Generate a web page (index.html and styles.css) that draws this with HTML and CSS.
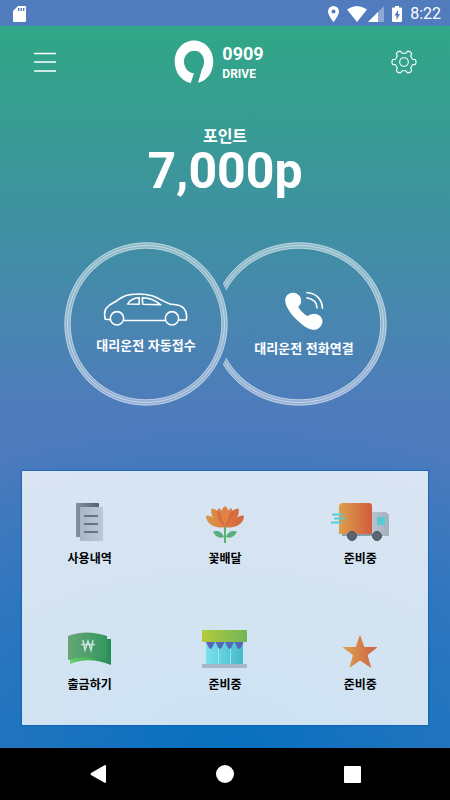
FILE: index.html
```html
<!DOCTYPE html>
<html lang="ko">
<head>
  <meta charset="UTF-8">
  <meta name="viewport" content="width=device-width, initial-scale=1">
  <title>0909 DRIVE</title>
  <link rel="stylesheet" href="styles.css">
</head>
<body>
  <div class="statusbar">
    <svg width="14" height="16" viewBox="0 0 14 16"><path fill="#fff" d="M5 0h7a1 1 0 0 1 1 1v14a1 1 0 0 1-1 1H1a1 1 0 0 1-1-1V5z"/><path stroke="#507bbd" stroke-width="1.4" d="M5.7 2v3M8.2 2v3M10.7 2v3"/></svg>
    <div class="status-icons">
      <svg class="pin" width="11" height="16" viewBox="0 0 11 16"><path fill="#fff" fill-rule="evenodd" d="M5.5 0A5.5 5.5 0 0 0 0 5.500C0 9.500 5.500 16 5.500 16S11 9.500 11 5.500A5.500 5.500 0 0 0 5.500 0zm0 3.600a2 2 0 1 1 0 4 2 2 0 0 1 0-4z"/></svg>
      <svg class="wifi" width="20" height="16" viewBox="0 0 20 16"><path fill="#fff" d="M0 3.500Q10-3.500 20 3.500L10 16z"/></svg>
      <svg class="signal" width="16" height="16" viewBox="0 0 16 16"><path fill="#fff" opacity=".35" d="M16 0v16H0z"/><path fill="#fff" d="M10 6v10H0z"/></svg>
      <svg class="battery" width="10" height="16" viewBox="0 0 10 16"><path fill="#fff" d="M3 0h4v1.500h2a1 1 0 0 1 1 1V15a1 1 0 0 1-1 1H1a1 1 0 0 1-1-1V2.500a1 1 0 0 1 1-1h2z"/><path fill="#507bbd" d="M6 4L2.500 9.500h2V14L8 8H6z"/></svg>
      <span class="clock">8:22</span>
    </div>
  </div>

  <main class="app">
    <header class="topbar">
      <button class="icon-btn" aria-label="메뉴">
        <svg width="24" height="24" viewBox="0 0 24 24"><path stroke="#fff" stroke-width="1.6" d="M1 3.500h22M1 12h22M1 21h22"/></svg>
      </button>
      <div class="logo">
        <svg width="40" height="44" viewBox="0 0 40 44"><path fill="#fff" d="M16.700 43C7 41 .7 32 .7 21.500C.7 10 9 .5 20 .5S39.300 10 39.300 21.500C39.300 32 33 41 24 42.800L28 29C29.500 27 30 24.500 30 21.500C30 15.500 26 10.700 20.300 10.700S10 15.500 10 21.500S14 32.800 20 33.300Z"/></svg>
        <div class="logo-text">
          <span class="logo-num">0909</span>
          <span class="logo-name">DRIVE</span>
        </div>
      </div>
      <button class="icon-btn" aria-label="설정">
        <svg width="26" height="26" viewBox="0 0 26 26" fill="none" stroke="#fff" stroke-width="1.100" stroke-linejoin="round"><path d="M21.600 10.200L24.200 10.600Q26 13 24.200 15.400L21.600 15.800L19.700 19L20.700 21.500Q19.500 24 16.600 23.900L14.900 21.800H11.100L9.400 23.900Q6.500 24 5.300 21.500L6.300 19L4.400 15.800L1.800 15.400Q0 13 1.800 10.600L4.400 10.200L6.300 7L5.300 4.500Q6.500 2 9.400 2.100L11.100 4.200H14.900L16.600 2.100Q19.500 2 20.700 4.500L19.700 7Z"/><circle cx="13" cy="13" r="4.300"/></svg>
      </button>
    </header>

    <section class="points">
      <h2>포인트</h2>
      <p>7,000p</p>
    </section>

    <section class="calls">
      <svg class="rings" width="324" height="164" viewBox="0 0 324 164" fill="none" stroke="#fff">
        <defs>
          <mask id="gap" maskUnits="userSpaceOnUse" x="0" y="0" width="324" height="164">
            <rect width="324" height="164" fill="#fff" stroke="none"/>
            <rect width="158" height="164" fill="#000" stroke="none"/>
            <circle cx="82" cy="82" r="87" fill="#000" stroke="none"/>
          </mask>
        </defs>
        <g stroke-width="6" stroke-opacity=".4">
          <circle cx="82" cy="82" r="78.500"/>
          <ellipse cx="235" cy="82" rx="84.500" ry="78.500" mask="url(#gap)"/>
        </g>
        <g stroke-width=".8" stroke-opacity=".6">
          <circle cx="82" cy="82" r="81.200"/><circle cx="82" cy="82" r="78.500"/><circle cx="82" cy="82" r="75.800"/>
          <g mask="url(#gap)"><ellipse cx="235" cy="82" rx="87.200" ry="81.200"/><ellipse cx="235" cy="82" rx="84.500" ry="78.500"/><ellipse cx="235" cy="82" rx="81.800" ry="75.800"/></g>
        </g>
      </svg>
      <button class="call call-auto">
        <svg width="86" height="35" viewBox="0 0 86 35" fill="none" stroke="#fff" stroke-width="1.600" stroke-linejoin="round"><path d="M7.300 27.700L2.300 27.300C1 22 1.300 18 4 15.500C6 12.500 9 11.500 12 10C20 4 24 2 36 2C52 2 56 8 67 12C73 13 78 12.500 81 16.500C84 20 84 24 83.300 28H75.700M20.700 28.500H62.300"/><circle cx="14" cy="26.300" r="6.700"/><circle cx="69" cy="26.300" r="6.700"/><path d="M24.700 12C27 7.500 30 6 36.200 5.700V12.300ZM39.300 5.700C47 5.500 52 8 57.700 12.800L39.700 12.300Z"/></svg>
        <span>대리운전 자동접수</span>
      </button>
      <button class="call call-phone">
        <svg width="40" height="40" viewBox="0 0 40 40"><path fill="#fff" d="M8.500 2.700C4.500 3 1.200 6 1.200 10.500C1.500 17.500 8 25.500 14 31C18 34.500 23 39 28.500 39.800C34 40.500 38.500 36 38.500 31C38 25.500 33.500 23.500 29 24C26.500 24.200 25 25.300 23.300 26C20 24 16 20 14.300 17C17 14 17.800 12 16.800 8.500C16 5 12.500 2.500 8.500 2.700Z"/><path fill="none" stroke="#fff" stroke-width="1.600" d="M22.300 2.500C32 3 38 9 38.500 18.700M22.300 7.700C29 8.500 32.700 12 33.200 18.500"/></svg>
        <span>대리운전 전화연결</span>
      </button>
    </section>

    <nav class="menu">
      <a href="#" class="item">
        <svg width="60" height="44" viewBox="0 0 60 44">
          <defs>
            <linearGradient id="docBack"><stop stop-color="#84909d"/><stop offset="1" stop-color="#55616e"/></linearGradient>
            <linearGradient id="docFront"><stop stop-color="#a9b7c5"/><stop offset="1" stop-color="#bac8d8"/></linearGradient>
          </defs>
          <rect x="16" y="3" width="23" height="34" rx="1" fill="url(#docBack)"/>
          <rect x="20" y="7" width="23" height="34" rx="1" fill="url(#docFront)"/>
          <path stroke="#66727f" stroke-width="2" d="M24 16h14M24 24h14M24 32h14"/>
        </svg>
        <span>사용내역</span>
      </a>
      <a href="#" class="item">
        <svg width="60" height="44" viewBox="0 0 60 44">
          <defs>
            <linearGradient id="petal" gradientUnits="userSpaceOnUse" x1="11" y1="0" x2="49" y2="0"><stop stop-color="#dc9748"/><stop offset="1" stop-color="#d5633f"/></linearGradient>
          </defs>
          <path d="M30 26v17" stroke="#55b66d" stroke-width="2"/>
          <path fill="#59ae79" d="M29 37C27 31 22 30 18 31.500C20 36 24 39 29 37ZM31 37C33 31 38 30 42 31.500C40 36 36 39 31 37Z"/>
          <g fill="url(#petal)">
            <path d="M30 27C20 17 11 13 11 17C12 25 22 29 30 27ZM30 27C40 17 49 13 49 17C48 25 38 29 30 27Z"/>
            <path d="M30 27C18 22 15 14 16.500 8.500C24 9 30 18 30 27ZM30 27C42 22 45 14 43.500 8.500C36 9 30 18 30 27Z"/>
          </g>
          <g fill="#dc6335" opacity=".8">
            <path d="M30 27C21 19 21 11 24 8C30 13 32 21 30 27ZM30 27C39 19 39 11 36 8C30 13 28 21 30 27Z"/>
          </g>
          <path fill="#df8344" d="M30 25C24 17 25 10 30 6C35 10 36 17 30 25Z"/>
        </svg>
        <span>꽃배달</span>
      </a>
      <a href="#" class="item">
        <svg width="60" height="44" viewBox="0 0 60 44">
          <defs>
            <linearGradient id="cargo"><stop stop-color="#dda04b"/><stop offset="1" stop-color="#d15c3e"/></linearGradient>
            <linearGradient id="cab"><stop stop-color="#b9c4d0"/><stop offset="1" stop-color="#a4b0bd"/></linearGradient>
          </defs>
          <path fill="url(#cab)" d="M41 12h13q5 0 5 5v19H41z"/>
          <path stroke="#8e9ba8" stroke-width="2" d="M12 35h34"/>
          <path fill="url(#cargo)" d="M13 3h26q3 0 3 3v28H9V7q0-4 4-4z"/>
          <rect x="47" y="17" width="8" height="8" fill="#56cbd5"/>
          <path stroke="#55ccd6" stroke-width="2" d="M2 14.500h11M4 18.500h11M1 22.500h11"/>
          <g fill="#596572" stroke="#48535f"><circle cx="22" cy="36" r="4.500"/><circle cx="47" cy="36" r="4.500"/></g>
        </svg>
        <span>준비중</span>
      </a>
      <a href="#" class="item">
        <svg width="60" height="44" viewBox="0 0 60 44">
          <defs>
            <linearGradient id="note"><stop stop-color="#66a775"/><stop offset="1" stop-color="#359660"/></linearGradient>
            <linearGradient id="noteBack"><stop stop-color="#65d365"/><stop offset="1" stop-color="#258a56"/></linearGradient>
          </defs>
          <path fill="url(#noteBack)" d="M10 12H47V13h4V39Q29 30 10 38z"/>
          <path fill="url(#note)" d="M8 10Q26 3 47 10v25Q26 28 8 34z"/>
          <path fill="none" stroke="#c8e2dc" stroke-width="1.500" d="M23 14l2 10L28 15l3 9L33 14M21 18.500h14"/>
        </svg>
        <span>출금하기</span>
      </a>
      <a href="#" class="item">
        <svg width="60" height="44" viewBox="0 0 60 44">
          <defs>
            <linearGradient id="awning"><stop stop-color="#b4cb3a"/><stop offset="1" stop-color="#71b556"/></linearGradient>
            <linearGradient id="glass"><stop stop-color="#78e1ec"/><stop offset="1" stop-color="#46b9c9"/></linearGradient>
          </defs>
          <rect x="11" y="15" width="37" height="24" fill="url(#glass)"/>
          <path stroke="#9ae5ef" d="M23.500 16v22M35.500 16v22"/>
          <path fill="#5567b8" d="M11 16h9l-3 6-1.500 1-1.500-1zM20.500 16h9l-3 6-1.500 1-1.500-1zM30 16h9l-3 6-1.500 1-1.500-1zM39.500 16h9l-3 6-1.500 1-1.500-1z"/>
          <rect x="7" y="4" width="45" height="12" rx="1" fill="url(#awning)"/>
          <rect x="7" y="38" width="45" height="4" fill="#a7b7cb"/>
        </svg>
        <span>준비중</span>
      </a>
      <a href="#" class="item">
        <svg width="60" height="44" viewBox="0 0 60 44">
          <defs>
            <linearGradient id="star"><stop stop-color="#dda24c"/><stop offset="1" stop-color="#cf6046"/></linearGradient>
          </defs>
          <path fill="url(#star)" stroke="url(#star)" stroke-linejoin="round" d="M30 10l4 11.500h12.500L37 29l3.500 12L30 34l-10 7 3.500-12-10-7.500H26z"/>
        </svg>
        <span>준비중</span>
      </a>
    </nav>
  </main>

  <footer class="navbar">
    <button class="icon-btn" aria-label="뒤로"><svg width="18" height="18" viewBox="0 0 18 18"><path fill="#fff" d="M16 0q1 0 1 1v16q0 1-1 1L2 10q-1-1 0-2z"/></svg></button>
    <button class="icon-btn" aria-label="홈"><svg width="18" height="18" viewBox="0 0 18 18"><circle cx="9" cy="9" r="9" fill="#fff"/></svg></button>
    <button class="icon-btn" aria-label="최근 앱"><svg width="18" height="18" viewBox="0 0 18 18"><rect x="1" y="1" width="17" height="17" rx="1" fill="#fff"/></svg></button>
  </footer>
</body>
</html>
```
FILE: styles.css
```css
* { box-sizing: border-box; }
body { margin: 0; min-height: 100vh; display: flex; flex-direction: column; font-family: "Noto Sans CJK KR", sans-serif; color: #fff; background: #000; }
svg { display: block; }
h2, p { margin: 0; }
button { padding: 0; border: 0; background: none; color: inherit; font-family: inherit; cursor: pointer; }

.statusbar { height: 26px; padding: 1px 9px 0 13px; display: flex; align-items: center; justify-content: space-between; background: #507bbd; }
.status-icons { display: flex; align-items: center; }
.wifi { margin-left: 8px; }
.signal { margin-left: 1px; }
.battery { margin-left: 8px; }
.clock { margin-left: 8px; font: 400 16px/20px Roboto, sans-serif; }

.app {
  flex: 1;
  padding-bottom: 23px;
  background:
    radial-gradient(120% 46% at 50% 100%, #0670bf 0%, rgba(6, 112, 191, 0) 100%),
    linear-gradient(#30a786 0%, #4f7bbd 54%, #4a7abf 100%);
}

.topbar { height: 72px; padding: 0 33px; display: flex; align-items: center; justify-content: space-between; }
.logo { display: flex; align-items: center; gap: 8px; padding-right: 10px; }
.logo-text { display: flex; flex-direction: column; font-family: Roboto, sans-serif; font-weight: 700; }
.logo-num { font-size: 18px; line-height: 24px; }
.logo-name { font-size: 12px; line-height: 16px; }

.points { padding-top: 27px; text-align: center; }
.points h2 { font-size: 16px; line-height: 20px; font-weight: 700; }
.points p { font: 700 50px/52px Roboto, sans-serif; }

.calls { position: relative; width: 322px; max-width: 100%; height: 164px; margin: 45px auto 0; display: flex; }
.rings { position: absolute; top: 0; left: 0; }
.call { position: relative; height: 162px; display: flex; flex-direction: column; align-items: center; justify-content: center; gap: 9px; width: 164px; font-size: 13px; line-height: 18px; font-weight: 700; }
.call-phone { margin-left: -6px; }

.menu {
  margin: 65px 22px 0;
  padding: 29px 0 33px;
  display: grid;
  grid-template-columns: repeat(3, 1fr);
  row-gap: 60px;
  background: rgba(255, 255, 255, 0.8);
  box-shadow: 0 0 1px 1px rgba(0, 90, 180, 0.5);
}
.item { display: flex; flex-direction: column; align-items: center; gap: 6px; color: #000; font-size: 12px; line-height: 16px; font-weight: 700; text-decoration: none; }

.navbar { height: 52px; padding: 0 35px; display: grid; grid-template-columns: repeat(3, 1fr); align-items: center; justify-items: center; background: #000; }
```
